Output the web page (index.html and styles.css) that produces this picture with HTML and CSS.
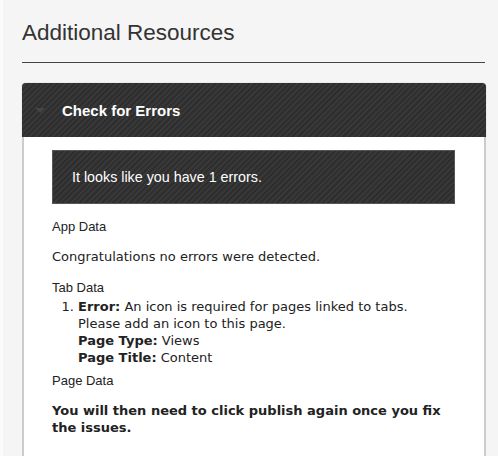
FILE: index.html
```html
<!DOCTYPE html>
<html>
<head>
<meta charset="utf-8">
<link rel="stylesheet" href="styles.css">
</head>
<body>
<div class="page">
  <h1 class="title">Additional Resources</h1>
  <div class="rule"></div>
  <div class="panel">
    <div class="panel-head">
      <span class="caret"></span>
      <span class="panel-title">Check for Errors</span>
    </div>
    <div class="panel-body">
      <div class="alert">It looks like you have 1 errors.</div>
      <div class="label">App Data</div>
      <p class="msg">Congratulations no errors were detected.</p>
      <div class="label">Tab Data</div>
      <ol class="errors">
        <li><b>Error:</b> An icon is required for pages linked to tabs. Please add an icon to this page.<br><b>Page Type:</b> Views<br><b>Page Title:</b> Content</li>
      </ol>
      <div class="label label-tight">Page Data</div>
      <p class="final">You will then need to click publish again once you fix the issues.</p>
    </div>
  </div>
</div>
</body>
</html>
```
FILE: styles.css
```css
html, body {
  margin: 0;
  padding: 0;
  background: #f5f5f5;
}
body {
  border-left: 3px solid #fbfbfb;
  box-sizing: border-box;
  height: 100vh;
  overflow: hidden;
}
.page {
  padding: 20px 12px 0 19px;
  height: 100vh;
  box-sizing: border-box;
  display: flex;
  flex-direction: column;
}
.title {
  margin: 0;
  font-family: "Liberation Sans", Arial, sans-serif;
  font-weight: normal;
  font-size: 22.5px;
  line-height: 26px;
  color: #333;
}
.rule {
  margin-top: 16px;
  height: 1px;
  background: #444;
  margin-right: 1px;
}
.panel {
  margin-top: 20px;
  flex: 1;
  display: flex;
  flex-direction: column;
}
.panel-head {
  flex: 0 0 54px;
  border-radius: 4px 4px 0 0;
  background-color: #333;
  background-image: repeating-linear-gradient(-45deg, #2e2e2e 0 2px, #383838 2px 4px);
  display: flex;
  align-items: center;
  padding-left: 13px;
  box-shadow: 0 0 1px rgba(0,0,0,0.4);
}
.caret {
  width: 0;
  height: 0;
  border-left: 5px solid transparent;
  border-right: 5px solid transparent;
  border-top: 5px solid #444;
  margin-right: 17px;
}
.panel-title {
  font-family: "Liberation Sans", Arial, sans-serif;
  font-weight: bold;
  font-size: 15px;
  color: #fff;
}
.panel-body {
  flex: 1;
  background: #fff;
  border-left: 2px solid #ccc;
  border-right: 2px solid #ccc;
  padding: 13px 29px 0 28px;
}
.alert {
  height: 52px;
  border: 1px solid #555;
  background-color: #333;
  background-image: repeating-linear-gradient(-45deg, #2e2e2e 0 2px, #383838 2px 4px);
  display: flex;
  align-items: center;
  padding-left: 19px;
  font-family: "Liberation Sans", Arial, sans-serif;
  font-size: 14.3px;
  color: #fff;
}
.label {
  font-family: "Liberation Sans", Arial, sans-serif;
  font-size: 13px;
  color: #222;
  margin-top: 15px;
  line-height: 15px;
}
.label-tight {
  margin-top: 7px;
}
.msg {
  font-family: Verdana, "DejaVu Sans", sans-serif;
  font-size: 13px;
  color: #222;
  margin: 14px 0 0;
  line-height: 17px;
}
.errors {
  font-family: Verdana, "DejaVu Sans", sans-serif;
  font-size: 13px;
  color: #222;
  line-height: 17px;
  margin: 3px 40px 0 0;
  padding-left: 26px;
}
.final {
  font-family: Verdana, "DejaVu Sans", sans-serif;
  font-size: 13px;
  font-weight: bold;
  color: #222;
  line-height: 17px;
  margin: 14px 0 0;
}
```
